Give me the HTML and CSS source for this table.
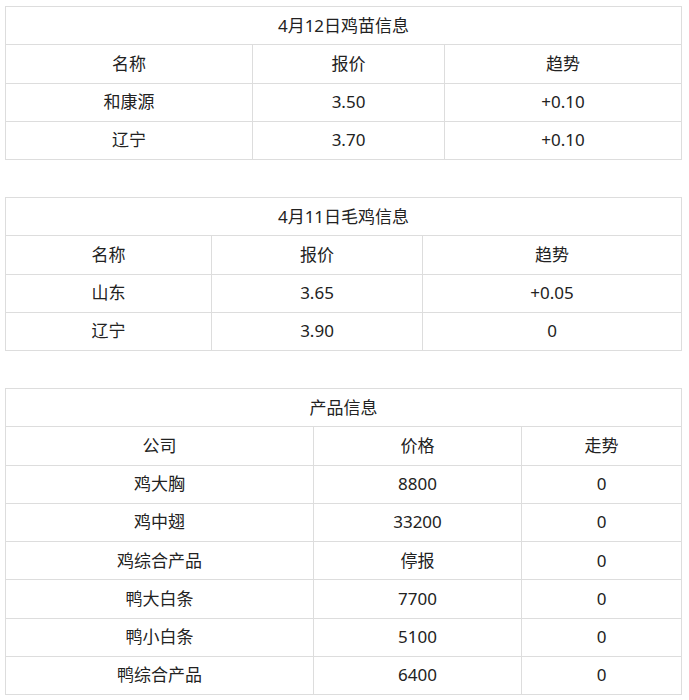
FILE: index.html
```html
<!DOCTYPE html>
<html lang="zh">
<head>
<meta charset="utf-8">
<link rel="stylesheet" href="styles.css">
</head>
<body>
<div class="page">
  <table class="data t1">
    <colgroup><col class="c1"><col class="c2"><col class="c3"></colgroup>
    <tr><td colspan="3">4月12日鸡苗信息</td></tr>
    <tr><td>名称</td><td>报价</td><td>趋势</td></tr>
    <tr><td>和康源</td><td>3.50</td><td>+0.10</td></tr>
    <tr><td>辽宁</td><td>3.70</td><td>+0.10</td></tr>
  </table>
  <table class="data t2">
    <colgroup><col class="c1"><col class="c2"><col class="c3"></colgroup>
    <tr><td colspan="3">4月11日毛鸡信息</td></tr>
    <tr><td>名称</td><td>报价</td><td>趋势</td></tr>
    <tr><td>山东</td><td>3.65</td><td>+0.05</td></tr>
    <tr><td>辽宁</td><td>3.90</td><td>0</td></tr>
  </table>
  <table class="data t3">
    <colgroup><col class="c1"><col class="c2"><col class="c3"></colgroup>
    <tr><td colspan="3">产品信息</td></tr>
    <tr><td>公司</td><td>价格</td><td>走势</td></tr>
    <tr><td>鸡大胸</td><td>8800</td><td>0</td></tr>
    <tr><td>鸡中翅</td><td>33200</td><td>0</td></tr>
    <tr><td>鸡综合产品</td><td>停报</td><td>0</td></tr>
    <tr><td>鸭大白条</td><td>7700</td><td>0</td></tr>
    <tr><td>鸭小白条</td><td>5100</td><td>0</td></tr>
    <tr><td>鸭综合产品</td><td>6400</td><td>0</td></tr>
  </table>
</div>
</body>
</html>
```
FILE: styles.css
```css
html, body {
  margin: 0;
  padding: 0;
  background: #ffffff;
}
.page {
  padding: 6px 0 0 5px;
  display: flex;
  flex-direction: column;
  gap: 37px;
  font-family: "Noto Sans", "Noto Sans CJK SC", sans-serif;
  font-size: 17px;
  color: #222222;
}
.data {
  width: 676px;
  border-collapse: collapse;
  table-layout: fixed;
}
.data td {
  border: 1px solid #dddddd;
  text-align: center;
  vertical-align: middle;
  height: 37.25px;
  padding: 0;
  line-height: 22px;
}
.t1 .c1 { width: 247px; }
.t1 .c2 { width: 192px; }
.t1 .c3 { width: 237px; }
.t2 .c1 { width: 206px; }
.t2 .c2 { width: 211px; }
.t2 .c3 { width: 259px; }
.t3 .c1 { width: 308px; }
.t3 .c2 { width: 208px; }
.t3 .c3 { width: 160px; }
```
